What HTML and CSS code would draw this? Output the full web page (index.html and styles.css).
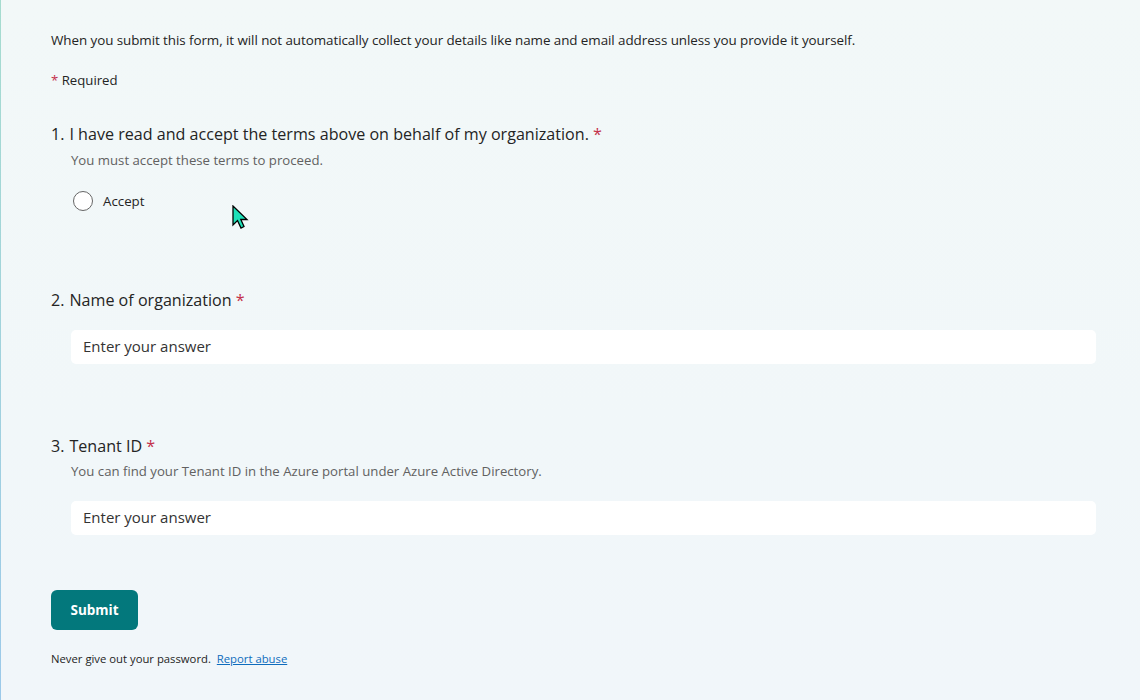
FILE: index.html
```html
<!DOCTYPE html>
<html lang="en">
<head>
<meta charset="utf-8">
<title>Form</title>
<link rel="stylesheet" href="styles.css">
</head>
<body>
<div class="page">
  <main class="form">
    <p class="notice">When you submit this form, it will not automatically collect your details like name and email address unless you provide it yourself.</p>
    <p class="required-note"><span class="star">*</span> Required</p>

    <section class="question q1">
      <h2 class="q-title"><span class="num">1.</span><span>I have read and accept the terms above on behalf of my organization.<span class="star"> *</span></span></h2>
      <p class="q-sub">You must accept these terms to proceed.</p>
      <label class="radio-row">
        <span class="radio"></span>
        <span class="radio-label">Accept</span>
      </label>
    </section>

    <section class="question q2">
      <h2 class="q-title"><span class="num">2.</span><span>Name of organization<span class="star"> *</span></span></h2>
      <div class="input">Enter your answer</div>
    </section>

    <section class="question q3">
      <h2 class="q-title"><span class="num">3.</span><span>Tenant ID<span class="star"> *</span></span></h2>
      <p class="q-sub">You can find your Tenant ID in the Azure portal under Azure Active Directory.</p>
      <div class="input">Enter your answer</div>
    </section>

    <button class="submit" type="button">Submit</button>

    <p class="footer">Never give out your password.&nbsp; <a href="#" class="link">Report abuse</a></p>
  </main>

  <svg class="cursor" width="20" height="28" viewBox="0 0 20 28" xmlns="http://www.w3.org/2000/svg">
    <path d="M1 1 L1 20 L5.5 15.5 L9 23 L12 21.5 L8.8 14.5 L15 14.5 Z" fill="#1de0b8" stroke="#000" stroke-width="1.3" stroke-linejoin="miter"/>
  </svg>
</div>
</body>
</html>
```

FILE: styles.css
```css
html, body {
  margin: 0;
  padding: 0;
}

body {
  font-family: "Open Sans", "Noto Sans", sans-serif;
  color: #242424;
}

.page {
  position: relative;
  width: 1140px;
  height: 700px;
  overflow: hidden;
  background: linear-gradient(180deg, #f2f8f8 0%, #f1f7f9 60%, #f1f6fa 100%);
  border-left: 1px solid #9fd6cf;
  border-image: linear-gradient(180deg, #a6dccf 0%, #9cc9ea 100%) 1;
  box-sizing: border-box;
}

.form {
  display: flex;
  flex-direction: column;
  padding: 30px 44px 0 50px;
}

.notice {
  margin: 0;
  font-size: 13.4px;
  line-height: 20px;
  letter-spacing: -0.06px;
}

.required-note {
  margin: 20px 0 0;
  font-size: 13.2px;
  line-height: 20px;
}

.star {
  color: #c4314b;
}

.question {
  display: flex;
  flex-direction: column;
}

.q1 {
  margin-top: 33px;
}

.q2 {
  margin-top: 78px;
}

.q3 {
  margin-top: 71px;
}

.q-title {
  margin: 0;
  display: flex;
  gap: 5px;
  font-weight: 400;
  font-size: 16.1px;
  line-height: 22px;
  color: #242424;
}

.q-sub {
  margin: 4px 0 0 20px;
  font-size: 13.2px;
  line-height: 20px;
  color: #616161;
}

.q1 .q-sub {
  margin-top: 5px;
}

.radio-row {
  display: flex;
  align-items: center;
  gap: 10px;
  margin: 21px 0 0 22px;
  height: 20px;
}

.radio {
  width: 18px;
  height: 18px;
  border: 1px solid #666;
  border-radius: 50%;
  background: #fff;
}

.radio-label {
  font-size: 13.3px;
  line-height: 20px;
}

.input {
  margin: 19px 0 0 20px;
  height: 34px;
  box-sizing: border-box;
  padding: 0 0 2px 12px;
  background: #fff;
  border-radius: 5px;
  display: flex;
  align-items: center;
  font-size: 15px;
  color: #333;
}

.q3 .input {
  margin-top: 20px;
}

.submit {
  align-self: flex-start;
  margin-top: 55px;
  width: 87px;
  height: 40px;
  border: none;
  border-radius: 6px;
  background: #03787c;
  color: #fff;
  font-family: "Open Sans", "Noto Sans", sans-serif;
  font-weight: 700;
  font-size: 13.5px;
  cursor: pointer;
}

.footer {
  margin: 20px 0 0;
  font-size: 11.3px;
  line-height: 18px;
  color: #242424;
}

.link {
  color: #0f6cbd;
  text-decoration: underline;
}

.cursor {
  position: absolute;
  left: 231px;
  top: 205px;
}
```
